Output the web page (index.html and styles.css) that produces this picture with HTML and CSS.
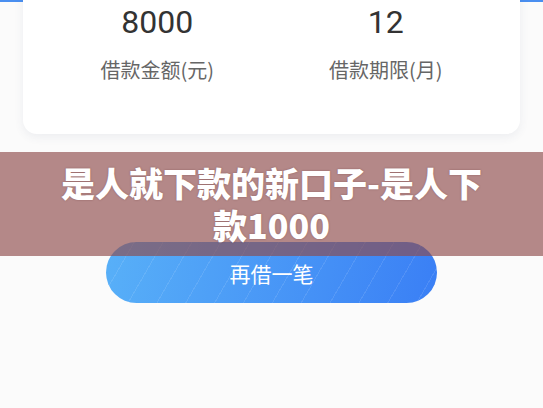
FILE: index.html
```html
<!DOCTYPE html>
<html lang="zh-CN">
<head>
    <meta charset="UTF-8">
    <meta name="viewport" content="width=device-width, initial-scale=1.0">
    <title>是人就下款的新口子-是人下款1000</title>
    <link rel="stylesheet" href="styles.css">
</head>
<body>
    <div class="top-band"></div>
    <div class="loan-card">
        <div class="stat">
            <div class="stat-value">8000</div>
            <div class="stat-label">借款金额(元)</div>
        </div>
        <div class="stat">
            <div class="stat-value">12</div>
            <div class="stat-label">借款期限(月)</div>
        </div>
    </div>
    <button class="again-btn">再借一笔</button>

    <div class="title-banner">
        <h1 class="title-text">是人就下款的新口子-是人下款1000</h1>
    </div>
</body>
</html>
```

FILE: styles.css
```css
body { margin: 0; background: #fbfbfb; font-family: Roboto, "Noto Sans CJK SC", sans-serif; height: 408px; overflow: hidden; position: relative; }
.top-band { height: 2px; background: #4a8ff0; }
.loan-card { margin: -30px 23px 0; padding: 30px 20px 50px; background: #fff; border-radius: 14px; box-shadow: 0 3px 10px rgba(60, 80, 120, 0.08); display: grid; grid-template-columns: 1fr 1fr; }
.stat { text-align: center; }
.stat-value { font-size: 32px; line-height: 40px; color: #333; }
.stat-label { margin-top: 14px; font-size: 20px; line-height: 28px; color: #666; font-family: "Noto Sans CJK SC", sans-serif; }
.again-btn { display: block; width: 331px; height: 61px; margin: 108px auto 0; border: none; border-radius: 31px; color: #fff; font-size: 21px; font-family: "Noto Sans CJK SC", sans-serif;
    background: repeating-linear-gradient(120deg, transparent 0 24px, rgba(255, 255, 255, 0.1) 24px 25px), linear-gradient(100deg, #58b0f8, #3a7ff5); }
/* overlay caption across the middle */
.title-banner { position: absolute; top: 152px; left: 0; right: 0; height: 104px; padding: 0 50px; background: rgba(142, 73, 74, 0.65); display: flex; align-items: center; justify-content: center; }
.title-text { margin: 0; font-size: 34px; line-height: 42px; font-weight: 900; color: #fff; text-align: center; font-family: "Noto Sans CJK SC", sans-serif; text-shadow: 0 0 2px rgba(80, 30, 30, 0.4); }
```
